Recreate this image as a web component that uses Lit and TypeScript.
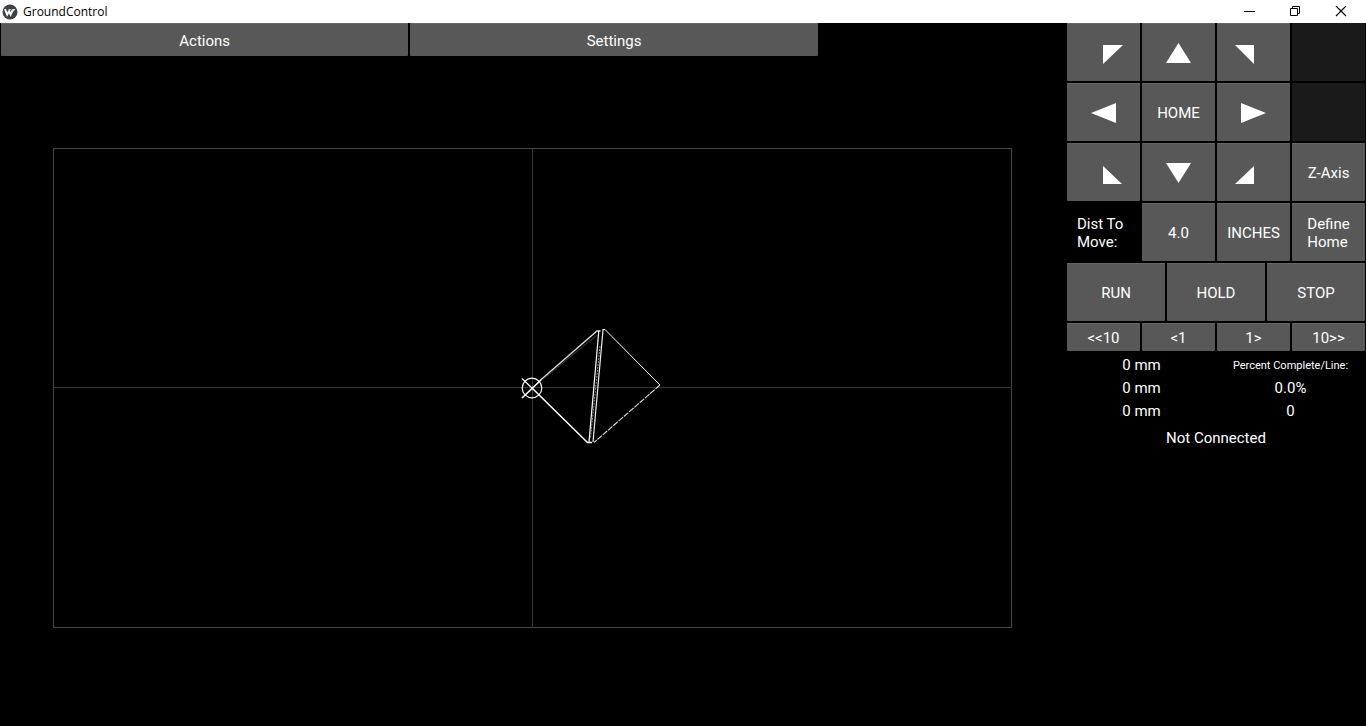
import { LitElement, html, css, svg } from "lit";
import { customElement } from "lit/decorators.js";

const ARROWS: Record<string, string> = {
  "Up left": "36,22 56,22 36,41",
  "Up": "24,40 49,40 36.5,20",
  "Up right": "18,22 37,22 37,41",
  "Left": "24,30 49,20 49,40",
  "Right": "24,20 24,40 49,30",
  "Down left": "36,23 36,41 55,41",
  "Down": "24,20 49,20 36.5,40",
  "Down right": "37,23 37,41 18,41",
};

@customElement("app-root")
export class AppRoot extends LitElement {
  static styles = css`
    :host {
      display: flex;
      flex-direction: column;
      min-height: 100vh;
      background: #000;
      color: #fff;
      font: 15px/18px Roboto, "Liberation Sans", sans-serif;
    }
    button {
      font: inherit;
      color: inherit;
      border: 0;
      margin: 0;
      padding: 0;
    }
    .titlebar {
      display: flex;
      align-items: center;
      height: 23px;
      padding: 0 2px;
      background: #fff;
      color: #000;
    }
    .logo {
      display: block;
      width: 16px;
      height: 16px;
    }
    .title {
      flex: 1;
      margin: 0 0 0 5px;
      font: 12px/22px "Open Sans", "Noto Sans", sans-serif;
    }
    .window-button {
      width: 46px;
      height: 23px;
      background: none;
    }
    .window-button svg {
      display: block;
      margin: 0 auto;
    }
    .body {
      flex: 1;
      display: flex;
    }
    .workspace {
      flex: 1;
      min-width: 0;
      display: flex;
      flex-direction: column;
    }
    .menu {
      display: grid;
      grid-template-columns: 1fr 1fr;
      gap: 2px;
      width: 76.8%;
      box-sizing: border-box;
      padding: 0 1px;
    }
    .key {
      display: flex;
      align-items: center;
      justify-content: center;
      min-height: 58px;
      padding-top: 2px;
      background: #585858;
      border-radius: 1px;
      box-shadow: inset 0 1px #666;
    }
    .key.menu-item {
      min-height: 33px;
    }
    .key.short {
      min-height: 28px;
    }
    .key.off {
      background: #1a1a1a;
      box-shadow: none;
    }
    .plot {
      flex: 1;
      width: 100%;
      min-height: 0;
      display: block;
    }
    .panel {
      width: 300px;
      box-sizing: border-box;
      padding: 0 1px;
      display: flex;
      flex-direction: column;
      gap: 2px;
    }
    .four {
      display: grid;
      grid-template-columns: repeat(4, 1fr);
      gap: 2px;
    }
    .three {
      display: grid;
      grid-template-columns: repeat(3, 1fr);
      gap: 2px;
    }
    .hint {
      display: flex;
      align-items: center;
      padding: 2px 0 0 10px;
    }
    .two-line {
      text-align: left;
    }
    .readout {
      display: grid;
      grid-template-columns: 1fr 1fr;
      text-align: center;
      line-height: 23px;
      padding-top: 1px;
    }
    .small {
      font-size: 11px;
    }
    .status {
      grid-column: 1 / -1;
      line-height: 30px;
    }
  `;

  private arrow(name: string) {
    return html`<button class="key" aria-label=${name}>
      <svg width="73" height="56" viewBox="0 2 73 56" aria-hidden="true">
        ${svg`<polygon points=${ARROWS[name]} fill="#fff" />`}
      </svg>
    </button>`;
  }

  private key(label: string, extra = "") {
    return html`<button class="key ${extra}">${label}</button>`;
  }

  render() {
    return html`
      <header class="titlebar">
        <svg class="logo" viewBox="0 0 16 16" aria-hidden="true">
          <circle cx="8" cy="8" r="7.5" fill="#3c4143" />
          <path d="M3 5.2 5.2 10.6 7.2 7.2 8.6 10.6 10.8 6" fill="none" stroke="#fff" stroke-width="2" />
          <path d="M6.3 5h2.6L7.8 7.6zM9.8 5h3.6l-1.5 2.2h-1.7z" fill="#ddd" />
        </svg>
        <h1 class="title">GroundControl</h1>
        <button class="window-button" aria-label="Minimize">
          <svg width="12" height="12" viewBox="0 0 12 12"><path d="M1 5.5h11" stroke="#000" /></svg>
        </button>
        <button class="window-button" aria-label="Restore">
          <svg width="12" height="12" viewBox="0 0 12 12">
            <path d="M1.5 2.5h7v7h-7zM3.5 2.5v-2h7v7h-2" fill="none" stroke="#000" />
          </svg>
        </button>
        <button class="window-button" aria-label="Close">
          <svg width="12" height="12" viewBox="0 0 12 12">
            <path d="M1 0l10 10M11 0L1 10" stroke="#000" stroke-width="1.1" />
          </svg>
        </button>
      </header>
      <div class="body">
        <main class="workspace">
          <nav class="menu">
            ${this.key("Actions", "menu-item")} ${this.key("Settings", "menu-item")}
          </nav>
          <svg class="plot" viewBox="-532 -332 1066 670" role="img" aria-label="Tool path">
            <g fill="none" stroke="#464646" shape-rendering="crispEdges">
              <rect x="-478.5" y="-239.5" width="958" height="479" />
              <path stroke="#383838" d="M-478.5 -.5H479.5M.5 -239.5V239.5" />
            </g>
            <g fill="none" stroke="#fff">
              <circle cx="0" cy="0" r="9.8" stroke-width="1.2" />
              <path d="M-10 -9.5 0 0" stroke-width="1.2" />
              <path d="M-10 10 9 -8" stroke-width="1.7" />
              <path d="M0 0 55.5 54.5H60" stroke-width="1.5" />
              <path d="M8 -7.5 65 -57H68.5" stroke="#ddd" stroke-width="1.3" />
              <path d="M10 -8 65 -53" stroke="#444" stroke-width="1" />
              <path d="M66.8 -57 57 54" stroke-width="1.2" />
              <path d="M71 -58 61 54" stroke="#eee" stroke-width="1.2" />
              <path d="M68 -42 58.5 50" stroke="#999" stroke-dasharray="2 1" />
              <path d="M70.5 -58.5H73L128 -3" stroke-width="1" />
              <path d="M128 -3 62 54.5" stroke="#ddd" stroke-width="1.1" stroke-dasharray="6 1" />
            </g>
          </svg>
        </main>
        <aside class="panel">
          <div class="four">
            ${this.arrow("Up left")} ${this.arrow("Up")} ${this.arrow("Up right")}
            <button class="key off" disabled aria-label="Unassigned macro 1"></button>
            ${this.arrow("Left")} ${this.key("HOME")} ${this.arrow("Right")}
            <button class="key off" disabled aria-label="Unassigned macro 2"></button>
            ${this.arrow("Down left")} ${this.arrow("Down")} ${this.arrow("Down right")}
            ${this.key("Z-Axis")}
            <div class="hint"><span>Dist To<br />Move:</span></div>
            ${this.key("4.0")} ${this.key("INCHES")}
            <button class="key"><span class="two-line">Define<br />Home</span></button>
          </div>
          <div class="three">${this.key("RUN")} ${this.key("HOLD")} ${this.key("STOP")}</div>
          <div class="four">
            ${this.key("<<10", "short")} ${this.key("<1", "short")} ${this.key("1>", "short")}
            ${this.key("10>>", "short")}
          </div>
          <div class="readout">
            <span>0 mm</span><span class="small">Percent Complete/Line:</span>
            <span>0 mm</span><span>0.0%</span>
            <span>0 mm</span><span>0</span>
            <span class="status">Not Connected</span>
          </div>
        </aside>
      </div>
    `;
  }
}
